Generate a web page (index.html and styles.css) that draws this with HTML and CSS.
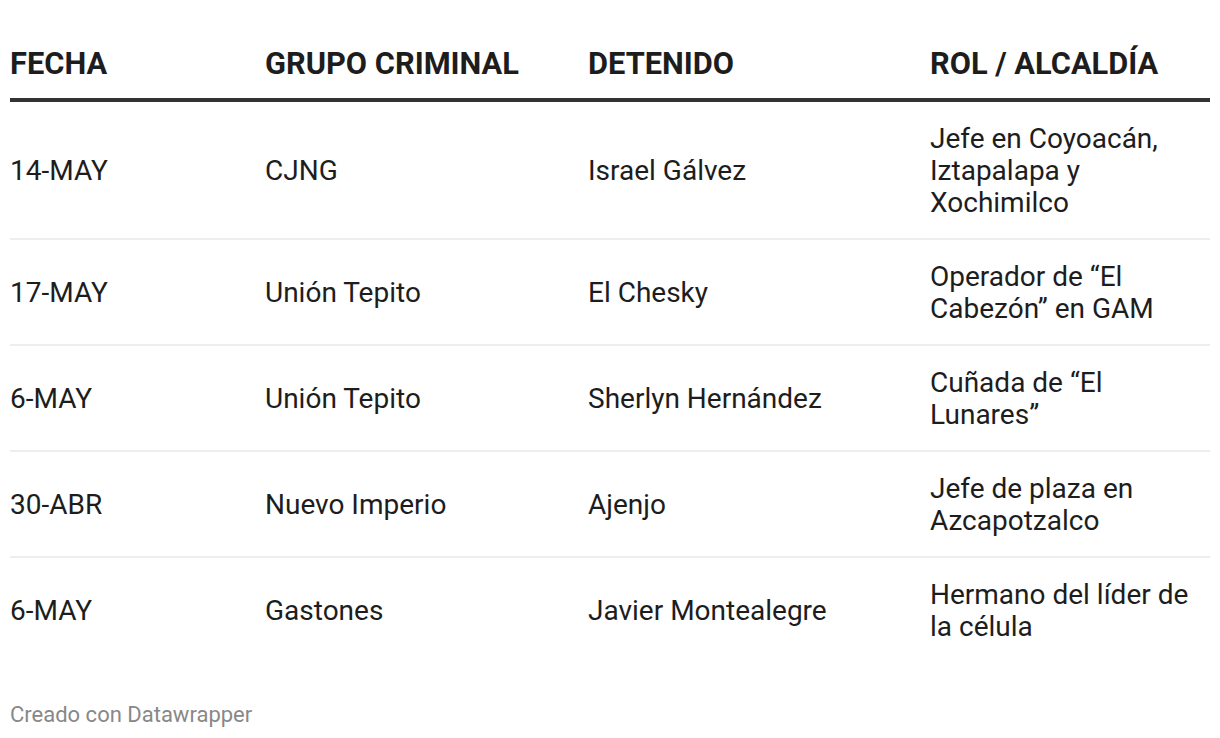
FILE: index.html
```html
<!DOCTYPE html>
<html lang="es">
<head>
<meta charset="utf-8">
<title>Detenidos</title>
<link rel="stylesheet" href="styles.css">
</head>
<body>
<div class="chart">
  <table class="dw-table">
    <colgroup>
      <col class="c1"><col class="c2"><col class="c3"><col class="c4">
    </colgroup>
    <thead>
      <tr>
        <th>FECHA</th>
        <th>GRUPO CRIMINAL</th>
        <th>DETENIDO</th>
        <th>ROL / ALCALDÍA</th>
      </tr>
    </thead>
    <tbody>
      <tr>
        <td>14-MAY</td>
        <td>CJNG</td>
        <td>Israel Gálvez</td>
        <td>Jefe en Coyoacán, Iztapalapa y Xochimilco</td>
      </tr>
      <tr>
        <td>17-MAY</td>
        <td>Unión Tepito</td>
        <td>El Chesky</td>
        <td>Operador de “El Cabezón” en GAM</td>
      </tr>
      <tr>
        <td>6-MAY</td>
        <td>Unión Tepito</td>
        <td>Sherlyn Hernández</td>
        <td>Cuñada de “El Lunares”</td>
      </tr>
      <tr>
        <td>30-ABR</td>
        <td>Nuevo Imperio</td>
        <td>Ajenjo</td>
        <td>Jefe de plaza en Azcapotzalco</td>
      </tr>
      <tr class="last">
        <td>6-MAY</td>
        <td>Gastones</td>
        <td>Javier Montealegre</td>
        <td>Hermano del líder de la célula</td>
      </tr>
    </tbody>
  </table>
  <div class="footer">Creado con Datawrapper</div>
</div>
</body>
</html>
```

FILE: styles.css
```css
html, body {
  margin: 0;
  padding: 0;
  background: #ffffff;
}

body {
  font-family: Roboto, "Liberation Sans", Arial, sans-serif;
  color: #1d1d1d;
}

.chart {
  padding: 0 10px;
}

.dw-table {
  width: 1200px;
  border-collapse: collapse;
  table-layout: fixed;
}

.c1 { width: 255px; }
.c2 { width: 323px; }
.c3 { width: 342px; }
.c4 { width: 280px; }

.dw-table th {
  text-align: left;
  font-weight: 700;
  font-size: 30.8px;
  line-height: 32px;
  padding: 48px 0 18px 0;
  border-bottom: 4px solid #333333;
  color: #1d1d1d;
}

.dw-table td {
  font-size: 28px;
  line-height: 32px;
  padding: 21px 0 19px 0;
  vertical-align: middle;
  border-bottom: 2px solid #eeeeee;
}

.dw-table tr.last td {
  border-bottom: none;
}

.footer {
  margin-top: 41px;
  font-size: 22px;
  line-height: 24px;
  color: #888888;
}
```
